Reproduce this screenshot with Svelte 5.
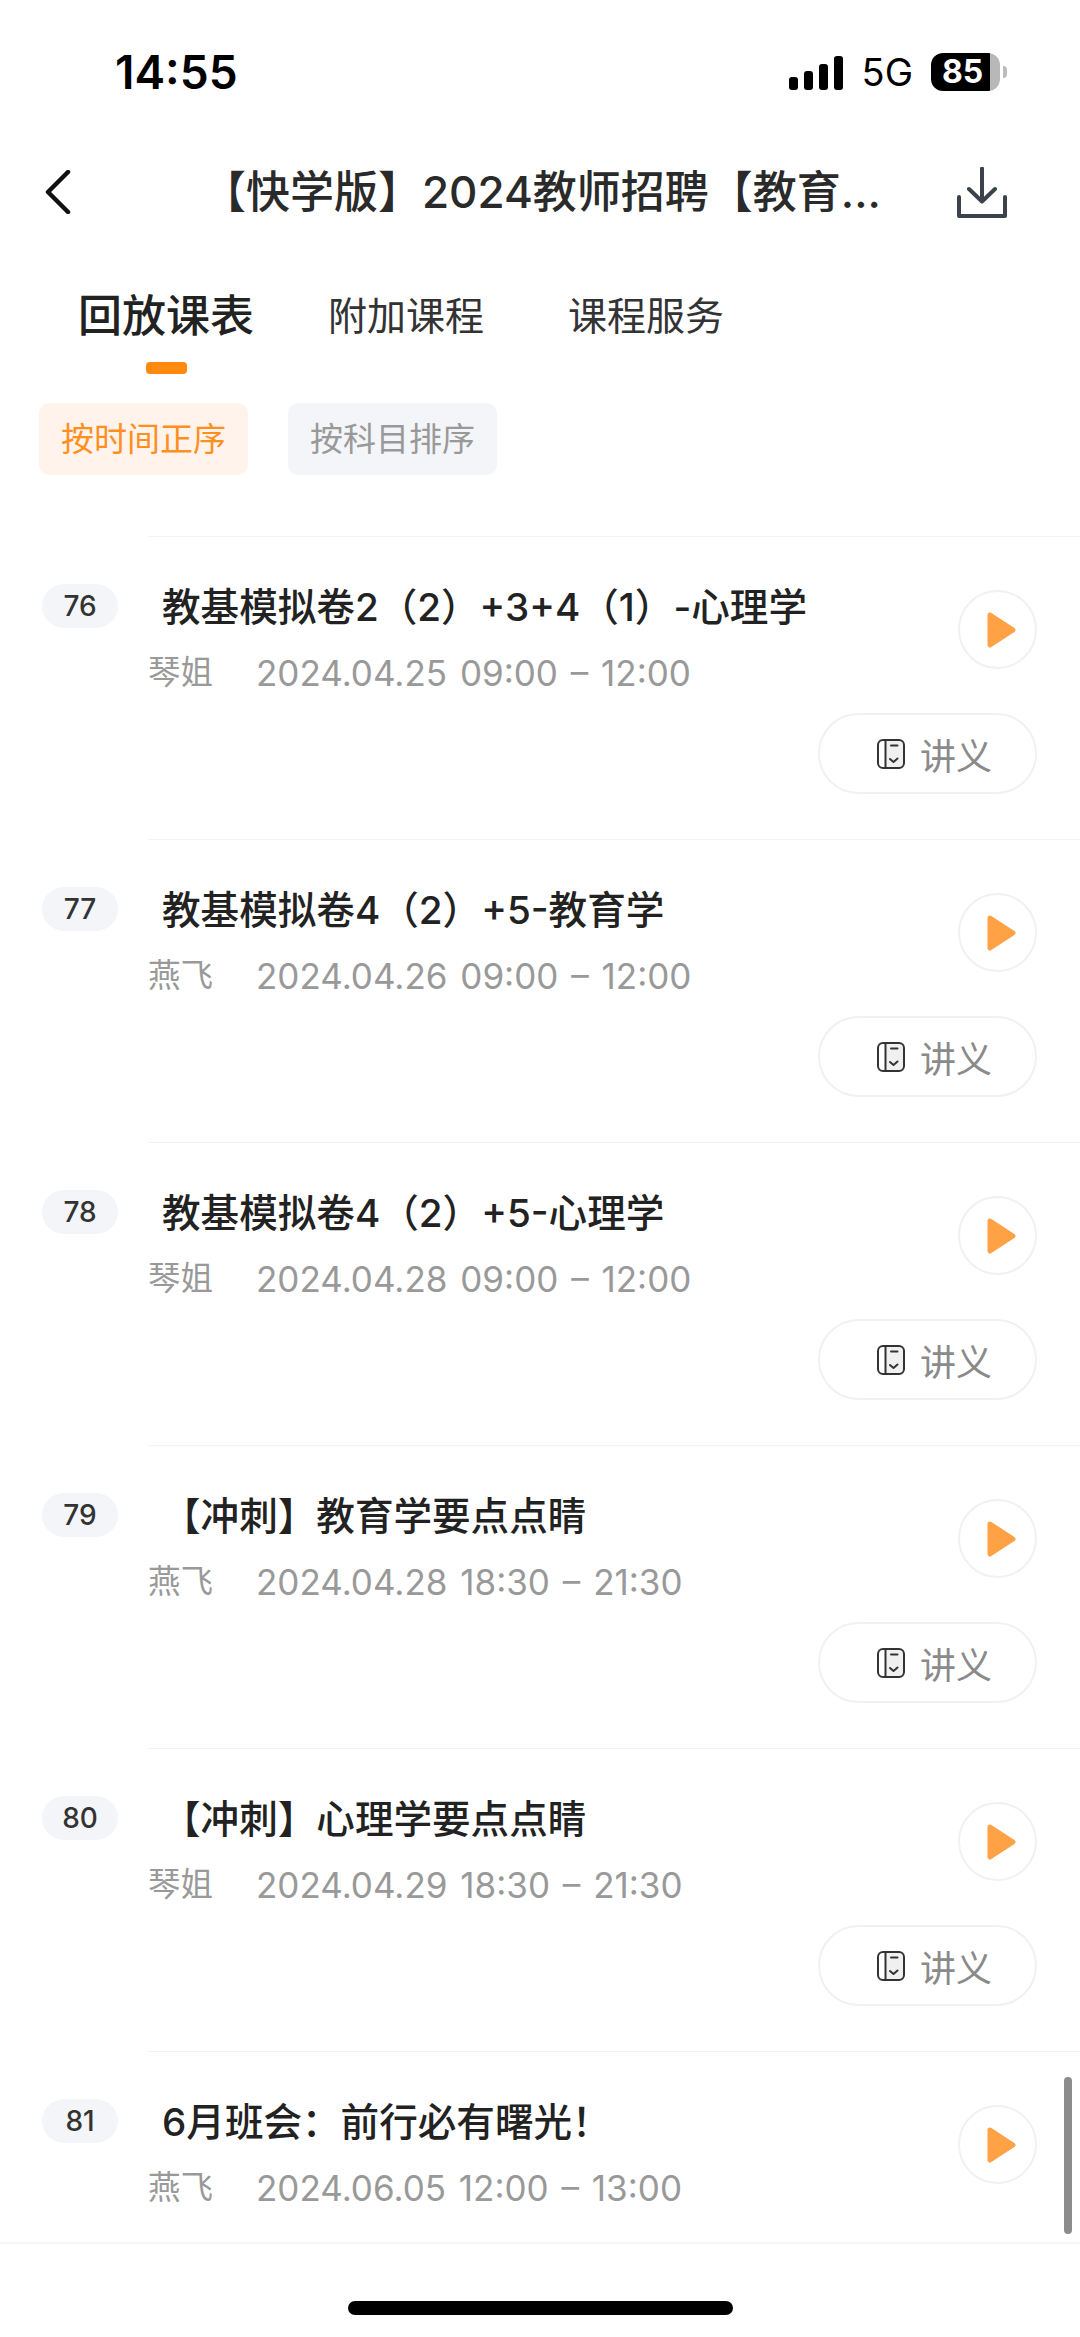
<script>
  const lessons = [
    { no: 76, title: '教基模拟卷2（2）+3+4（1）-心理学', teacher: '琴姐', time: '2024.04.25 09:00 – 12:00', notes: true },
    { no: 77, title: '教基模拟卷4（2）+5-教育学', teacher: '燕飞', time: '2024.04.26 09:00 – 12:00', notes: true },
    { no: 78, title: '教基模拟卷4（2）+5-心理学', teacher: '琴姐', time: '2024.04.28 09:00 – 12:00', notes: true },
    { no: 79, title: '【冲刺】教育学要点点睛', teacher: '燕飞', time: '2024.04.28 18:30 – 21:30', notes: true },
    { no: 80, title: '【冲刺】心理学要点点睛', teacher: '琴姐', time: '2024.04.29 18:30 – 21:30', notes: true },
    { no: 81, title: '6月班会：前行必有曙光！', teacher: '燕飞', time: '2024.06.05 12:00 – 13:00', notes: false }
  ];
</script>

<div class="page">
  <div class="status">
    <span class="clock">14:55</span>
    <div class="status-right">
      <svg class="signal" width="55" height="35" viewBox="0 0 55 35">
        <rect x="0" y="21" width="9" height="13" rx="3" />
        <rect x="15" y="15" width="9" height="19" rx="3" />
        <rect x="30" y="8" width="9" height="26" rx="3" />
        <rect x="45" y="0" width="9" height="34" rx="3" />
      </svg>
      <span class="net">5G</span>
      <div class="battery">
        <div class="battery-body"><span>85</span></div>
        <div class="battery-nub"></div>
      </div>
    </div>
  </div>

  <div class="nav">
    <svg class="back" width="26" height="44" viewBox="0 0 26 44">
      <path d="M23 2 L3 22 L23 42" />
    </svg>
    <div class="nav-title">【快学版】2024教师招聘【教育...</div>
    <svg class="download" width="50" height="51" viewBox="0 0 50 51">
      <path d="M25 1.5 V34 M12 22 L25 34.5 L38 22 M2 30 V49 H48 V30" />
    </svg>
  </div>

  <div class="tabs">
    <div class="tab active">
      <span>回放课表</span>
      <i></i>
    </div>
    <div class="tab"><span>附加课程</span></div>
    <div class="tab last"><span>课程服务</span></div>
  </div>

  <div class="filters">
    <div class="chip on">按时间正序</div>
    <div class="chip">按科目排序</div>
  </div>

  <div class="list">
    {#each lessons as item}
      <div class="row">
        <div class="no-col"><span class="no">{item.no}</span></div>
        <div class="body" class:short={!item.notes}>
          <div class="top">
            <div class="text">
              <div class="title">{item.title}</div>
              <div class="sub">
                <span class="teacher">{item.teacher}</span>
                <span class="time">{item.time}</span>
              </div>
            </div>
            <div class="play">
              <svg width="30" height="36" viewBox="0 0 30 36">
                <path d="M4 3 L27 18 L4 33 Z" />
              </svg>
            </div>
          </div>
          {#if item.notes}
            <div class="actions">
              <div class="notes">
                <svg width="28" height="30" viewBox="0 0 28 30">
                  <rect class="page-fill" x="8" y="1" width="19" height="28" rx="4" />
                  <rect class="outline" x="1" y="1" width="26" height="28" rx="5" />
                  <path class="outline" d="M8.5 1 V29 M14 6.5 H20.5 M13 20 L16.5 23 L20.5 19.5" />
                </svg>
                <span>讲义</span>
              </div>
            </div>
          {/if}
        </div>
      </div>
    {/each}
    <div class="scrollbar"></div>
  </div>

  <div class="home"></div>
</div>

<style>
  :global(body) {
    margin: 0;
    background: #fff;
  }

  .page {
    position: relative;
    width: 1080px;
    height: 2337px;
    overflow: hidden;
    background: #fff;
    font-family: Inter, "Noto Sans CJK SC", sans-serif;
    color: #222;
  }

  .status {
    height: 144px;
    box-sizing: border-box;
    padding: 48px 73px 0 115px;
    display: flex;
    justify-content: space-between;
    align-items: flex-start;
  }

  .clock {
    font-size: 46px;
    line-height: 48px;
    font-weight: 600;
    color: #000;
  }

  .status-right {
    display: flex;
    align-items: center;
    height: 48px;
  }

  .signal {
    fill: #000;
    margin-right: 18px;
    margin-top: 2px;
  }

  .net {
    font-size: 38px;
    line-height: 48px;
    color: #000;
    margin-right: 18px;
    font-weight: 400;
  }

  .battery {
    display: flex;
    align-items: center;
  }

  .battery-body {
    width: 69px;
    height: 38px;
    box-sizing: border-box;
    border-radius: 12px;
    background: linear-gradient(90deg, #000 0 59px, #b8b8b8 59px);
    color: #fff;
    font-size: 32px;
    font-weight: 700;
    line-height: 38px;
    padding-left: 11px;
  }

  .battery-nub {
    width: 4px;
    height: 12px;
    margin-left: 3px;
    background: #bbb;
    border-radius: 0 6px 6px 0;
  }

  .nav {
    height: 96px;
    display: flex;
    align-items: center;
    padding: 0 73px 0 45px;
  }

  .back path {
    fill: none;
    stroke: #111;
    stroke-width: 4.5;
    stroke-linecap: round;
    stroke-linejoin: round;
  }

  .nav-title {
    flex: 1;
    margin-left: 131px;
    font-size: 44px;
    line-height: 56px;
    font-weight: 500;
    color: #2a2a2a;
    white-space: nowrap;
  }

  .download path {
    fill: none;
    stroke: #3a424c;
    stroke-width: 4;
    stroke-linecap: round;
    stroke-linejoin: round;
  }

  .tabs {
    display: flex;
    align-items: flex-start;
    padding: 46px 0 0 78px;
    gap: 74px;
    height: 88px;
  }

  .tab {
    display: flex;
    flex-direction: column;
    align-items: center;
  }

  .tab.last {
    margin-left: 10px;
  }

  .tab span {
    font-size: 39px;
    line-height: 60px;
    color: #333;
    white-space: nowrap;
  }

  .tab.active span {
    font-size: 44px;
    font-weight: 500;
    color: #222;
  }

  .tab i {
    display: block;
    width: 41px;
    height: 12px;
    margin-top: 16px;
    border-radius: 4px;
    background: #ff8a0d;
  }

  .filters {
    display: flex;
    gap: 40px;
    padding: 29px 0 0 39px;
  }

  .chip {
    width: 209px;
    height: 72px;
    border-radius: 10px;
    background: #f3f5f8;
    color: #999;
    font-size: 33px;
    line-height: 72px;
    text-align: center;
  }

  .chip.on {
    background: #fff3ec;
    color: #ff8f1f;
  }

  .list {
    position: relative;
    margin-top: 61px;
    border-bottom: 2px solid #f5f5f5;
  }

  .row {
    display: flex;
  }

  .no-col {
    width: 148px;
    flex: none;
    box-sizing: border-box;
    padding: 48px 0 0 42px;
  }

  .no {
    display: block;
    width: 76px;
    height: 44px;
    border-radius: 22px;
    background: #f3f5f8;
    color: #333;
    font-size: 28px;
    line-height: 44px;
    text-align: center;
    font-weight: 500;
  }

  .body {
    flex: 1;
    border-top: 1px solid #f3f3f3;
    padding: 43px 43px 45px 0;
  }

  .body.short {
    padding-bottom: 31px;
  }

  .top {
    display: flex;
    justify-content: space-between;
  }

  .title {
    font-size: 38.6px;
    line-height: 54px;
    font-weight: 500;
    color: #222;
    padding-left: 14px;
    white-space: nowrap;
  }

  .sub {
    display: flex;
    margin-top: 16px;
    font-size: 32.5px;
    line-height: 46px;
    color: #999;
  }

  .teacher {
    width: 108px;
  }

  .time {
    font-size: 35px;
    word-spacing: 3px;
    white-space: nowrap;
  }

  .play {
    width: 79px;
    height: 79px;
    box-sizing: border-box;
    margin-top: 10px;
    border: 2px solid #f1f1f1;
    border-radius: 50%;
    display: flex;
    align-items: center;
    justify-content: center;
    padding-left: 6px;
  }

  .play path {
    fill: #ffa245;
    stroke: #ffa245;
    stroke-width: 5;
    stroke-linejoin: round;
  }

  .actions {
    display: flex;
    justify-content: flex-end;
    margin-top: 17px;
  }

  .notes {
    width: 219px;
    height: 81px;
    box-sizing: border-box;
    padding-left: 14px;
    border: 2px solid #f1f1f1;
    border-radius: 41px;
    display: flex;
    align-items: center;
    justify-content: center;
    gap: 15px;
    font-size: 36px;
    color: #8a8a8a;
  }

  .page-fill {
    fill: #f0f0f0;
  }

  .outline {
    fill: none;
    stroke: #333;
    stroke-width: 2;
    stroke-linecap: round;
    stroke-linejoin: round;
  }

  .scrollbar {
    position: absolute;
    right: 8px;
    bottom: 8px;
    width: 8px;
    height: 157px;
    border-radius: 4px;
    background: #8c8c8c;
  }

  .home {
    position: absolute;
    left: 348px;
    top: 2301px;
    width: 385px;
    height: 14px;
    border-radius: 7px;
    background: #000;
  }
</style>
